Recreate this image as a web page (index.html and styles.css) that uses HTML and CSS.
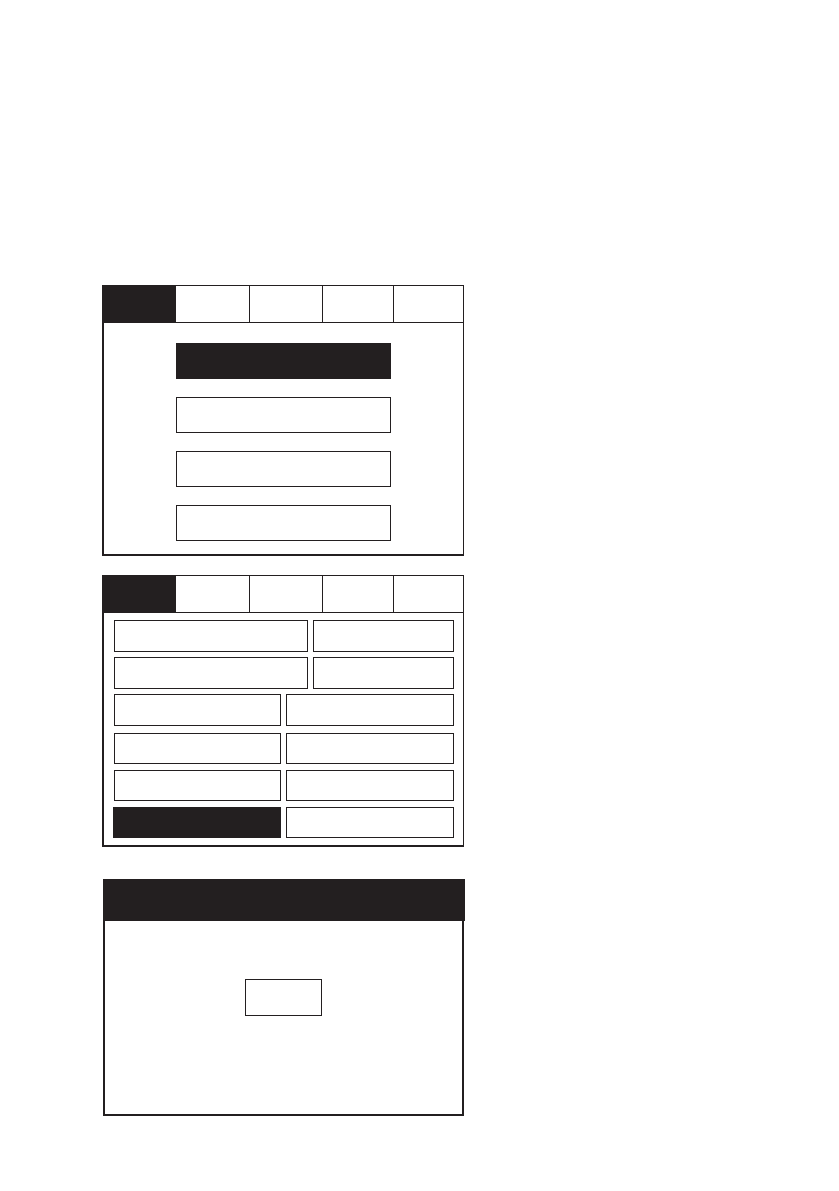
FILE: index.html
```html
<!DOCTYPE html>
<html>
<head>
<meta charset="utf-8">
<link rel="stylesheet" href="styles.css">
</head>
<body>
<div class="page">
  <section class="panel panel-a">
    <div class="tabs">
      <div class="tab active"></div>
      <div class="tab"></div>
      <div class="tab"></div>
      <div class="tab"></div>
      <div class="tab"></div>
    </div>
    <div class="menu">
      <div class="btn filled"></div>
      <div class="btn"></div>
      <div class="btn"></div>
      <div class="btn"></div>
    </div>
  </section>

  <section class="panel panel-b">
    <div class="tabs">
      <div class="tab active"></div>
      <div class="tab"></div>
      <div class="tab"></div>
      <div class="tab"></div>
      <div class="tab"></div>
    </div>
    <div class="grid">
      <div class="row row-wide"><div class="cell"></div><div class="cell"></div></div>
      <div class="row row-wide"><div class="cell"></div><div class="cell"></div></div>
      <div class="row row-half"><div class="cell"></div><div class="cell"></div></div>
      <div class="row row-half row-shift"><div class="cell"></div><div class="cell"></div></div>
      <div class="row row-half"><div class="cell"></div><div class="cell"></div></div>
      <div class="row row-half"><div class="cell filled"></div><div class="cell"></div></div>
    </div>
  </section>

  <section class="panel panel-c">
    <div class="header"></div>
    <div class="dialog-body">
      <div class="small-box"></div>
    </div>
  </section>
</div>
</body>
</html>
```

FILE: styles.css
```css
* { box-sizing: border-box; }
html, body { margin: 0; padding: 0; background: #ffffff; }
body { font-family: "Liberation Sans", Arial, sans-serif; }

.page {
  padding: 285px 0 0 102px;
  display: flex;
  flex-direction: column;
}

.panel {
  width: 362px;
  border: 1.5px solid #231f20;
  border-left-width: 2px;
  border-bottom-width: 2.5px;
  background: #fff;
}

.tabs {
  display: grid;
  grid-template-columns: 72px 73px 73px 71px 1fr;
  height: 37px;
  border-bottom: 1.5px solid #231f20;
}
.tab { border-left: 1.5px solid #231f20; }
.tab:nth-child(2) { border-left: none; }
.tab.active { background: #231f20; border-left: none; }

/* panel A */
.panel-a { height: 271px; }
.menu {
  display: flex;
  flex-direction: column;
  gap: 18px;
  padding: 20px 0 0 72px;
}
.btn {
  width: 215px;
  height: 36px;
  border: 1.5px solid #231f20;
}
.btn.filled { background: #231f20; }

/* panel B */
.panel-b { height: 272px; margin-top: 19px; }
.grid {
  display: flex;
  flex-direction: column;
  gap: 5.5px;
  padding: 7px 9px 0 10px;
}
.row {
  display: grid;
  height: 31.5px;
  column-gap: 4.5px;
}
.row-shift { margin-top: 1.5px; }
.row-wide { grid-template-columns: 194px 141px; }
.row-half { grid-template-columns: 167px 168px; column-gap: 5px; }
.cell { border: 1.5px solid #231f20; }
.cell.filled { background: #231f20; margin-left: -1px; }

/* panel C */
.panel-c {
  width: 361px;
  height: 237px;
  margin-top: 32px;
  margin-left: 1px;
  border-width: 0 2.5px 2.5px 2px;
}
.header { height: 42px; background: #231f20; margin: 0 -2.5px 0 -2px; }
.dialog-body {
  display: flex;
  justify-content: center;
  padding-top: 58px;
}
.small-box {
  width: 77px;
  height: 37px;
  border: 1.5px solid #231f20;
}
```
